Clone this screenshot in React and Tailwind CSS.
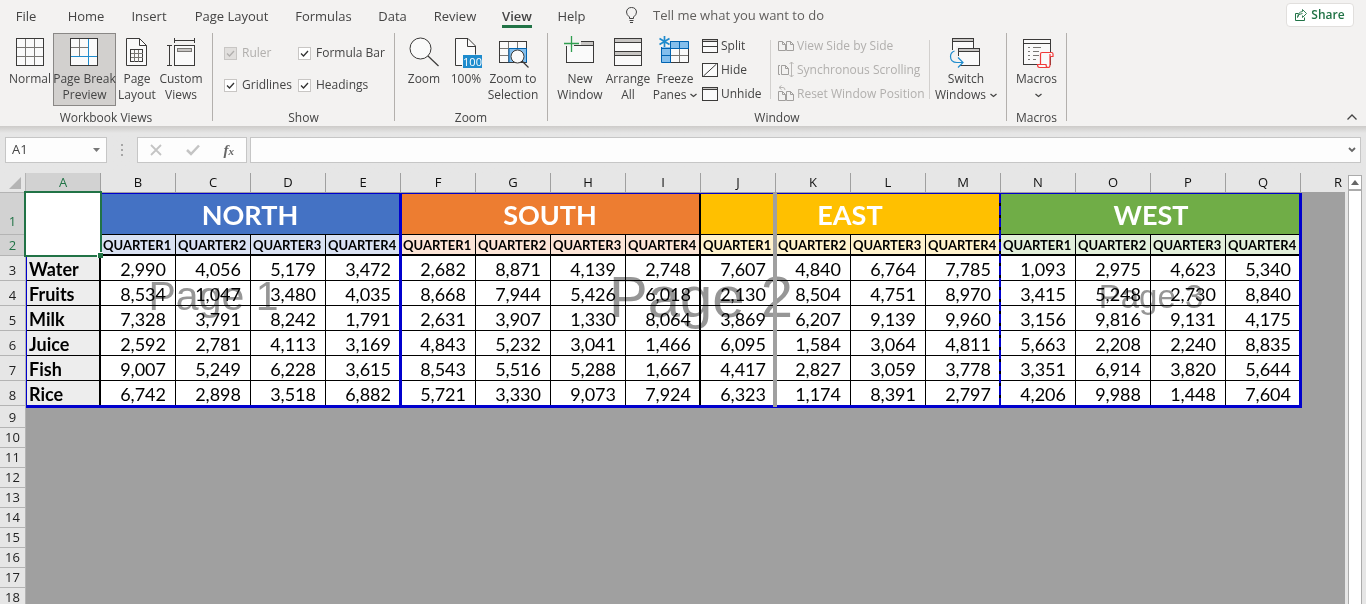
import React from "react";

const UI = "font-['Open_Sans','Noto_Sans',sans-serif]";
const CELL = "font-[Lato,Carlito,sans-serif]";

/* ---------- icons ---------- */
function Svg({ w = 30, h = 30, children, className = "" }) {
  return (
    <svg width={w} height={h} viewBox={`0 0 ${w} ${h}`} fill="none" aria-hidden="true" className={`shrink-0 overflow-visible ${className}`}>
      {children}
    </svg>
  );
}

const INK = "#3b3a39";
const MID = "#797774";

const NormalIcon = () => (
  <Svg>
    <rect x="1.5" y="1.5" width="27" height="27" fill="#fafafa" stroke={INK} />
    <path d="M10.5 2v26M19.5 2v26M2 10.5h26M2 19.5h26" stroke={MID} />
  </Svg>
);
const PageBreakIcon = () => (
  <Svg w={31}>
    <rect x="1.5" y="1.5" width="27" height="27" fill="#fafafa" stroke={INK} />
    <path d="M10.5 2v17M2 10.5h17" stroke={MID} />
    <path d="M19.5 2v26M2 19.5h26" stroke="#1e8bcd" />
  </Svg>
);
const PageLayoutIcon = () => (
  <Svg>
    <path d="M4.500 1.500h13l7 7v20h-20z" fill="#fafafa" stroke={INK} />
    <path d="M17.500 1.500v7h7" stroke={INK} />
    <rect x="8.500" y="12.500" width="12" height="12" stroke={INK} />
    <path d="M12.500 13v12M16.500 13v12M9 16.500h12M9 20.500h12" stroke={MID} />
  </Svg>
);
const CustomViewsIcon = () => (
  <Svg>
    <rect x="8.500" y="8.500" width="20" height="20" fill="#fafafa" stroke={INK} />
    <rect x="11.500" y="11.500" width="14" height="3" fill="#c8c6c4" stroke={MID} />
    <path d="M8.500 1v5M28.500 1v5M8.500 3.500h20M1 8.500h5M1 28.500h5M3.500 8.500v20" stroke={INK} />
  </Svg>
);
const ZoomIcon = () => (
  <Svg>
    <circle cx="11.500" cy="11.500" r="10.500" fill="#fafafa" stroke={INK} />
    <path d="M19 19l10.500 10" stroke={INK} strokeWidth="1.200" />
  </Svg>
);
const HundredIcon = () => (
  <Svg w={32} h={32} className="-mb-0.5">
    <path d="M12 28.500H5.500v-27h12.500l7.500 7.500v8.500" fill="#fafafa" stroke={INK} />
    <path d="M17.500 1.500v8h8" stroke={INK} />
    <rect x="13" y="18" width="19" height="13" fill="#1e8bcd" />
    <text x="22.500" y="29" textAnchor="middle" fontSize="11" fill="#fff" fontFamily="Open Sans">100</text>
  </Svg>
);
const ZoomSelIcon = () => (
  <Svg w={32} h={32} className="-mb-0.5">
    <rect x="2.500" y="4.500" width="27" height="21" fill="#fafafa" stroke={INK} />
    <path d="M11.500 5v20M20.500 5v20M3 11.500h26M3 18.500h26" stroke={MID} />
    <rect x="12" y="12" width="17" height="13" fill="#83beec" />
    <path d="M12 25.500V11.500h17.500v14" stroke="#0063b1" />
    <circle cx="20.500" cy="19.500" r="6.500" fill="#fafafa" stroke={INK} />
    <path d="M25 24l6.500 6.500" stroke={INK} strokeWidth="1.300" />
  </Svg>
);
const NewWindowIcon = () => (
  <Svg w={32}>
    <rect x="2.500" y="4.500" width="27" height="21" fill="#fafafa" stroke={INK} />
    <path d="M3 5h26v3H3z" fill="#c8c6c4" />
    <path d="M2 8.500h28" stroke={INK} />
    <path d="M0 3h17v5h-7v2H3.500v-1H0z" fill="#f3f2f1" />
    <path d="M7.500-1v16M0 6.500h15" stroke="#2f9e4f" strokeWidth="1.300" />
  </Svg>
);
const ArrangeIcon = () => (
  <Svg>
    <rect x="1.500" y="1.500" width="27" height="27" fill="#fafafa" stroke={INK} />
    <path d="M2 2h26v3H2zM2 15h26v3H2z" fill="#c8c6c4" />
    <path d="M1 5.500h28M1 14.500h28M1 18.500h28" stroke={INK} />
  </Svg>
);
const FreezeIcon = () => (
  <Svg w={32}>
    <rect x="2.500" y="4.500" width="27" height="21" fill="#fafafa" />
    <path d="M2 4h28v7.500H11.500v14H2z" fill="#83beec" />
    <path d="M20.500 12v14M12 18.500h18" stroke={MID} />
    <path d="M11.500 25.500h18V11" stroke={INK} />
    <path d="M12 25.500H2.500v-21h27v7H11.500v14M11.500 5v7M20.500 5v7M2 11.500h10M2 18.500h9" stroke="#0063b1" />
    <path d="M-1-2h12v12H-1z" fill="#f3f2f1" />
    <path d="M5.500-1v11M.5 1.500l10 6M10.500 1.500l-10 6" stroke="#1e8bcd" strokeWidth="1.700" />
  </Svg>
);
const SplitIcon = () => (
  <Svg w={16} h={14}>
    <rect x=".5" y=".5" width="15" height="13" fill="#fafafa" stroke={INK} />
    <path d="M1 1h14v1H1z" fill="#c8c6c4" />
    <path d="M0 2.500h16M0 7.500h16" stroke={INK} />
  </Svg>
);
const HideIcon = () => (
  <Svg w={16} h={14}>
    <rect x=".5" y=".5" width="15" height="13" fill="#fafafa" stroke={INK} />
    <path d="M1.500 13L14.500 1" stroke={INK} />
  </Svg>
);
const UnhideIcon = () => (
  <Svg w={16} h={14}>
    <rect x=".5" y=".5" width="15" height="13" fill="#fafafa" stroke={INK} />
    <path d="M1 1h14v1H1z" fill="#c8c6c4" />
    <path d="M0 2.500h16" stroke={INK} />
  </Svg>
);
const SideIcon = () => (
  <Svg w={16} h={16}>
    <path d="M.5 3.500h4l3 3v6h-7zM4.500 3.500v3h3M8.500 3.500h4l3 3v6h-7zM12.500 3.500v3h3" stroke="#a19f9d" />
  </Svg>
);
const SyncIcon = () => (
  <Svg w={16} h={16}>
    <path d="M2 3.500H.5v9H2M3.500 3.500h4l3 3v6h-7zM7.500 3.500v3h3" stroke="#a19f9d" />
    <path d="M13.500 0v15M11.500 2l2-2 2 2M11.500 13l2 2 2-2" stroke="#b9b7b5" />
  </Svg>
);
const ResetIcon = () => (
  <Svg w={16} h={16}>
    <path d="M.5 5.500h4l3 3v6h-7zM4.500 5.500v3h3M8.500 5.500h4l3 3v6h-7zM12.500 5.500v3h3" stroke="#a19f9d" />
    <path d="M3.500-.5L1 1.500l2.500 2M1 1.500h4q2 0 2 2.500" stroke="#b9b7b5" />
  </Svg>
);
const SwitchIcon = () => (
  <Svg w={32}>
    <rect x="2.500" y="1.500" width="21" height="17" fill="#fafafa" stroke={INK} />
    <path d="M3 2h20v2.500H3z" fill="#c8c6c4" />
    <path d="M2 4.500h22" stroke={INK} />
    <path d="M0 13h6V9h4v13H0z" fill="#f3f2f1" />
    <rect x="8.500" y="11.500" width="21" height="17" fill="#fafafa" stroke={INK} />
    <path d="M9 12h20v2.500H9z" fill="#c8c6c4" />
    <path d="M8 14.500h22" stroke={INK} />
    <path d="M6 19h4v10H6z" fill="#f3f2f1" />
    <path d="M4.500 14Q.5 15.500.5 19.500Q.5 25.500 7 25.500H12.500M8 20.500l5 5-5 5" stroke="#1e8bcd" strokeWidth="1.200" />
  </Svg>
);
const MacrosIcon = () => (
  <Svg w={32} h={32} className="-mb-0.5">
    <rect x="2.500" y="2.500" width="27" height="25" fill="#fafafa" stroke={INK} />
    <path d="M2 6.500h28" stroke={INK} />
    <path d="M7 10.500h2M12 10.500h8M7 14.500h2M12 14.500h6M7 18.500h2M12 18.500h6M7 22.500h2M12 22.500h3" stroke={MID} />
    <path d="M19.500 27.500V17q0-1.500 1.500-1.500h9.500q1.500 0 1.500 1.500v2.500h-3V28q0 2.500-2 2.500h-8.500q-2 0-2-3H26" fill="#fafafa" />
    <path
      d="M19.500 27.500V17q0-1.500 1.500-1.500h9.500q1.500 0 1.500 1.500v2.500h-3M29 17v11q0 2.500-2 2.500h-8.500q-2 0-2-3h8.500q0 3 2 3"
      stroke="#f03a3a"
      strokeWidth="1.200"
    />
  </Svg>
);
const Down = () => (
  <svg width="7" height="5" viewBox="0 0 7 5" fill="none" aria-hidden="true" className="ml-1 inline-block align-middle">
    <path d="M.5 1l3 2.500L6.500 1" stroke="#444" strokeWidth="1.300" />
  </svg>
);

/* ---------- ribbon parts ---------- */
const TABS = [
  ["File", "w-[50px]"],
  ["Home", "w-[70px]"],
  ["Insert", "w-[56px]"],
  ["Page Layout", "w-[109px]"],
  ["Formulas", "w-[75px]"],
  ["Data", "w-[63px]"],
  ["Review", "w-[62px]"],
  ["View", "w-[62px]"],
  ["Help", "w-[47px]"],
];

function Big({ icon, lines, width, active }) {
  return (
    <button
      type="button"
      className={`flex h-[73px] shrink-0 flex-col items-center border pt-[3px] leading-4 whitespace-nowrap ${width} ${
        active ? "border-[#8a8886] bg-[#d2d0ce]" : "border-transparent"
      }`}
    >
      {icon}
      <span className="mt-1 flex flex-col items-center">
        {lines.map((l, i) => (
          <span key={i}>{l}</span>
        ))}
      </span>
    </button>
  );
}

function Small({ icon, label, disabled }) {
  return (
    <button
      type="button"
      disabled={disabled}
      className={`flex h-6 items-center gap-[3px] whitespace-nowrap ${disabled ? "text-[#b1afad]" : ""}`}
    >
      {icon}
      {label}
    </button>
  );
}

function Group({ label, width, children, align = "justify-center" }) {
  return (
    <section aria-label={label} className={`flex h-[88px] shrink-0 flex-col border-r border-[#b3b0ad] ${width}`}>
      <div className={`flex h-[73px] shrink-0 ${align}`}>{children}</div>
      <div className="mt-1 text-center leading-4">{label}</div>
    </section>
  );
}

function Check({ label, disabled }) {
  return (
    <label className={`flex h-8 items-center gap-[5px] whitespace-nowrap ${disabled ? "text-[#b1afad]" : ""}`}>
      <span className="grid shrink-0">
        <input
          type="checkbox"
          defaultChecked
          disabled={disabled}
          className="col-start-1 row-start-1 size-[13px] appearance-none border border-[#c8c6c4] bg-white disabled:bg-[#e1dfdd]"
        />
        <svg width="13" height="13" viewBox="0 0 13 13" fill="none" aria-hidden="true" className="pointer-events-none col-start-1 row-start-1">
          <path d="M3 6.500l2.500 2.500L10 4" stroke={disabled ? "#b1afad" : "#333"} strokeWidth="1.300" />
        </svg>
      </span>
      {label}
    </label>
  );
}

function Ribbon() {
  return (
    <header className="flex h-[126px] shrink-0 flex-col bg-[#f3f2f1] text-xs text-[#444]">
      <nav className="flex h-8 shrink-0 items-start pl-px text-[13px]">
        {TABS.map(([t, w]) => (
          <button key={t} type="button" className={`flex h-7 shrink-0 flex-col items-center pt-[7px] leading-[18px] whitespace-nowrap ${w}`}>
            <span className={t === "View" ? "border-b-3 border-[#217346] font-semibold" : ""}>{t}</span>
          </button>
        ))}
        <label className="ml-[30px] flex items-center gap-[15px] pt-1.5">
          <svg width="13" height="18" viewBox="0 0 13 18" fill="none" className="shrink-0">
            <path d="M4.500 12.500V11Q1.500 9 1.500 6Q2 1.500 6.500 1.500T11.500 6Q11.500 9 8.500 11V12.500zM4.500 14.500h4M5 16.500h3" stroke="#444" />
          </svg>
          <input
            type="text"
            aria-label="Tell me what you want to do"
            placeholder="Tell me what you want to do"
            className="h-[18px] w-[190px] bg-transparent outline-none placeholder:text-[#605e5c]"
          />
        </label>
        <button
          type="button"
          className="mt-[3px] mr-3 ml-auto flex h-6 w-[68px] items-center justify-center gap-1 rounded-sm border border-[#e1dfdd] bg-white text-xs font-semibold text-[#217346]"
        >
          <svg width="12" height="12" viewBox="0 0 12 12" fill="none" aria-hidden="true">
            <path d="M3.500 4.500H.5v7h9v-3" stroke="#217346" />
            <path d="M2.500 8.500Q3 4.500 7.500 4.500M7.500 6.500v2l4-4-4-4v2Q3 3 2.500 8.500" stroke="#217346" strokeWidth=".9" />
          </svg>
          Share
        </button>
      </nav>
      <div className="flex min-w-0 pt-px">
        <Group label="Workbook Views" width="w-[213px]" align="pl-[7px]">
          <Big icon={<NormalIcon />} lines={["Normal"]} width="w-[46px]" />
          <Big icon={<PageBreakIcon />} lines={["Page Break", "Preview"]} width="w-[63px]" active />
          <Big icon={<PageLayoutIcon />} lines={["Page", "Layout"]} width="w-[42px]" />
          <Big icon={<CustomViewsIcon />} lines={["Custom", "Views"]} width="w-[46px]" />
        </Group>
        <Group label="Show" width="w-[182px]">
          <div className="grid w-full grid-cols-[74px_1fr] content-start pt-1 pl-[11px]">
            <Check label="Ruler" disabled />
            <Check label="Formula Bar" />
            <Check label="Gridlines" />
            <Check label="Headings" />
          </div>
        </Group>
        <Group label="Zoom" width="w-[153px]">
          <Big icon={<ZoomIcon />} lines={["Zoom"]} width="w-[44px]" />
          <Big icon={<HundredIcon />} lines={["100%"]} width="w-[40px]" />
          <Big icon={<ZoomSelIcon />} lines={["Zoom to", "Selection"]} width="w-[54px]" />
        </Group>
        <Group label="Window" width="w-[459px]">
          <Big icon={<NewWindowIcon />} lines={["New", "Window"]} width="w-[48px]" />
          <Big icon={<ArrangeIcon />} lines={["Arrange", "All"]} width="w-[48px]" />
          <Big icon={<FreezeIcon />} lines={["Freeze", <>Panes<Down /></>]} width="w-[46px]" />
          <div className="flex w-[68px] flex-col pt-px pl-1">
            <Small icon={<SplitIcon />} label="Split" />
            <Small icon={<HideIcon />} label="Hide" />
            <Small icon={<UnhideIcon />} label="Unhide" />
          </div>
          <div className="mx-1 mt-[7px] flex h-[59px] w-[160px] items-center border-x border-[#d2d0ce] pl-[7px]">
            <div className="flex flex-col">
              <Small icon={<SideIcon />} label="View Side by Side" disabled />
              <Small icon={<SyncIcon />} label="Synchronous Scrolling" disabled />
              <Small icon={<ResetIcon />} label="Reset Window Position" disabled />
            </div>
          </div>
          <Big icon={<SwitchIcon />} lines={["Switch", <>Windows<Down /></>]} width="w-[64px]" />
        </Group>
        <Group label="Macros" width="w-[60px]">
          <Big icon={<MacrosIcon />} lines={["Macros", <Down />]} width="w-[46px]" />
        </Group>
        <button type="button" aria-label="Collapse the ribbon" className="mr-2 ml-auto flex items-end">
          <svg width="12" height="8" viewBox="0 0 12 8" fill="none">
            <path d="M1.500 6.500L6 2l4.500 4.500" stroke="#444" strokeWidth="1.300" />
          </svg>
        </button>
      </div>
    </header>
  );
}

function FormulaBar() {
  return (
    <div className="flex h-[47px] shrink-0 items-start bg-linear-to-b from-[#cdcbc9] to-[#e6e6e6] to-15% px-[5px] pt-[11px] text-xs text-[#444]">
      <div className="flex h-[26px] w-[102px] items-center border border-[#c6c6c6] bg-[#fdfdfd] pr-1.5 pl-1.5">
        <input aria-label="Name box" defaultValue="A1" className="w-full min-w-0 bg-transparent text-[13px] outline-none" />
        <svg width="7" height="4" viewBox="0 0 7 4" className="shrink-0" aria-hidden="true">
          <path d="M0 0h7L3.500 4z" fill="#777" />
        </svg>
      </div>
      <div className="flex h-[26px] w-[30px] flex-col items-center justify-center gap-[3px]">
        <i className="size-[2px] bg-[#a6a6a6]" />
        <i className="size-[2px] bg-[#a6a6a6]" />
        <i className="size-[2px] bg-[#a6a6a6]" />
      </div>
      <div className="mr-[3px] flex h-[26px] w-[110px] items-center justify-around border border-[#c6c6c6] bg-[#fdfdfd]">
        <button type="button" aria-label="Cancel">
          <svg width="12" height="12" viewBox="0 0 12 12" fill="none">
            <path d="M1 1l10 10M11 1L1 11" stroke="#c4c4c4" strokeWidth="1.800" />
          </svg>
        </button>
        <button type="button" aria-label="Enter">
          <svg width="14" height="12" viewBox="0 0 14 12" fill="none">
            <path d="M1 6l4 4 8-8.500" stroke="#c4c4c4" strokeWidth="2.500" />
          </svg>
        </button>
        <button type="button" aria-label="Insert function" className="font-['Liberation_Serif',serif] text-[15px] leading-4 font-bold text-[#666] italic">
          f<span className="text-[11px]">x</span>
        </button>
      </div>
      <div className="flex h-[26px] flex-1 items-center border border-[#c6c6c6] bg-[#fdfdfd] pr-1 pl-2">
        <input aria-label="Formula bar" className="w-full min-w-0 bg-transparent outline-none" />
        <svg width="8" height="6" viewBox="0 0 8 6" fill="none" className="shrink-0" aria-hidden="true">
          <path d="M1 1l3 3 3-3" stroke="#666" strokeWidth="1.800" />
        </svg>
      </div>
    </div>
  );
}

/* ---------- sheet ---------- */
const COLS = "ABCDEFGHIJKLMNOPQR".split("");
const REGIONS = [
  ["NORTH", "bg-[#4472c4]", "bg-[#d9e1f2]"],
  ["SOUTH", "bg-[#ed7d31]", "bg-[#fce4d6]"],
  ["EAST", "bg-[#ffc000]", "bg-[#fff2cc]"],
  ["WEST", "bg-[#70ad47]", "bg-[#e2efda]"],
];
const DATA = [
  ["Water", "2,990 4,056 5,179 3,472 2,682 8,871 4,139 2,748 7,607 4,840 6,764 7,785 1,093 2,975 4,623 5,340"],
  ["Fruits", "8,534 1,047 3,480 4,035 8,668 7,944 5,426 6,018 2,130 8,504 4,751 8,970 3,415 5,248 2,730 8,840"],
  ["Milk", "7,328 3,791 8,242 1,791 2,631 3,907 1,330 8,064 3,869 6,207 9,139 9,960 3,156 9,816 9,131 4,175"],
  ["Juice", "2,592 2,781 4,113 3,169 4,843 5,232 3,041 1,466 6,095 1,584 3,064 4,811 5,663 2,208 2,240 8,835"],
  ["Fish", "9,007 5,249 6,228 3,615 8,543 5,516 5,288 1,667 4,417 2,827 3,059 3,778 3,351 6,914 3,820 5,644"],
  ["Rice", "6,742 2,898 3,518 6,882 5,721 3,330 9,073 7,924 6,323 1,174 8,391 2,797 4,206 9,988 1,448 7,604"],
];
const EMPTY = [9, 10, 11, 12, 13, 14, 15, 16, 17, 18];

function RowHead({ n, h, active }) {
  return (
    <th
      scope="row"
      className={`border-r border-b border-[#b4b4b4] p-0 text-center align-bottom text-[13px] leading-[19px] font-normal ${UI} ${h} ${
        active ? "bg-[#d2d2d2] text-[#217346]" : "bg-[#e6e6e6] text-[#222]"
      }`}
    >
      {n}
    </th>
  );
}

function Sheet() {
  return (
    <div className="relative min-w-0 flex-1 overflow-hidden bg-[#a0a0a0]">
      <table className="w-[1376px] table-fixed border-separate border-spacing-0 text-black">
        <colgroup>
          <col className="w-[26px]" />
          {COLS.map((c) => (
            <col key={c} className="w-[75px]" />
          ))}
        </colgroup>
        <thead>
          <tr className="h-5 bg-[#e6e6e6]">
            <th aria-label="Select all" className="h-5 border-r border-b border-[#b4b4b4] p-0">
              <svg width="13" height="12" viewBox="0 0 13 12" className="mr-[3px] ml-auto">
                <path d="M12 0v12H0z" fill="#b4b4b4" />
              </svg>
            </th>
            {COLS.map((c) => (
              <th
                key={c}
                scope="col"
                className={`h-5 border-r border-b border-[#a0a0a0] p-0 text-center text-[13px] leading-[19px] font-normal ${UI} ${
                  c === "A" ? "bg-[#d2d2d2] text-[#217346]" : "text-[#111]"
                }`}
              >
                {c}
              </th>
            ))}
          </tr>
        </thead>
        <tbody className={CELL}>
          <tr>
            <RowHead n={1} h="h-[42px] pb-[3px]" active />
            <td rowSpan={2} className="border-b-2 border-black bg-white p-0" />
            {REGIONS.map(([name, bg], i) => (
              <th
                key={name}
                scope="colgroup"
                colSpan={4}
                className={`border-b border-black p-0 pt-0.5 text-center text-[27px] leading-8 font-bold text-white ${i < 3 ? "border-r-2" : ""} ${bg}`}
              >
                {name}
              </th>
            ))}
          </tr>
          <tr>
            <RowHead n={2} h="h-[21px]" active />
            {REGIONS.map(([name, , tint]) =>
              [1, 2, 3, 4].map((q) => (
                <th
                  key={name + q}
                  scope="col"
                  className={`h-[21px] border-b-2 border-black p-0 pt-px pl-0.5 text-left text-[13px] leading-[18px] font-bold ${q === 4 ? "border-r-2" : "border-r"} ${tint}`}
                >
                  QUARTER{q}
                </th>
              )),
            )}
          </tr>
          {DATA.map(([item, nums], r) => (
            <tr key={item}>
              <RowHead n={r + 3} h="h-[25px]" />
              <th scope="row" className="h-[25px] border-r-2 border-b border-black bg-[#ededed] p-0 pt-0.5 pl-[3px] text-left text-[18px] leading-[22px] font-bold">
                {item}
              </th>
              {nums.split(" ").map((v, c) => (
                <td
                  key={c}
                  className={`h-[25px] border-b border-black bg-white p-0 pt-0.5 text-right text-[18px] leading-[22px] ${
                    c % 4 === 3 ? "border-r-2 pr-2" : "border-r pr-[9px]"
                  }`}
                >
                  {v}
                </td>
              ))}
            </tr>
          ))}
          {EMPTY.map((n) => (
            <tr key={n}>
              <RowHead n={n} h={n === 9 ? "h-[22px]" : "h-5"} />
              <td colSpan={18} className="p-0" />
            </tr>
          ))}
        </tbody>
      </table>

      {/* page-number watermarks */}
      <div className="pointer-events-none absolute top-5 left-[26px] flex h-[207px] w-[1275px] items-center font-['Liberation_Sans',sans-serif] text-[#969696] mix-blend-multiply">
        <span className="w-[375px] text-center text-[41px] leading-none">Page 1</span>
        <span className="w-[600px] text-center text-[58px] leading-none">Page 2</span>
        <span className="w-[300px] text-center text-[33px] leading-none">Page 3</span>
      </div>

      {/* print-area frame and page breaks */}
      <div className="pointer-events-none absolute top-5 left-[26px] h-[215px] w-[1276px] border-t border-r-3 border-b-3 border-l border-[#0000cd]">
        <div className="absolute inset-y-0 left-[372px] w-[3px] bg-[#0000cd]" />
        <div className="absolute inset-y-0 left-[972px] w-0.5 bg-[repeating-linear-gradient(#0000cd_0_9px,#000_9px_12px)]" />
        <div className="absolute -top-px -bottom-0.5 left-[746px] w-1 bg-[#a0a0a0]" />
      </div>

      {/* active cell */}
      <div className="pointer-events-none absolute top-[18px] left-6 h-[66px] w-[78px] border-2 border-[#217346] bg-white">
        <div className="absolute -right-[3px] -bottom-[3px] size-[6px] border-t border-l border-white bg-[#217346]" />
      </div>
    </div>
  );
}

export default function App() {
  return (
    <div className={`flex h-screen flex-col overflow-hidden bg-[#e6e6e6] ${UI}`}>
      <Ribbon />
      <FormulaBar />
      <main className="flex min-h-0 flex-1">
        <Sheet />
        <div className="flex w-[21px] shrink-0 flex-col pt-0.5 pr-1 pl-[3px]">
          <button type="button" aria-label="Scroll up" className="flex h-[15px] items-center justify-center border border-[#ababab] bg-white">
            <svg width="8" height="5" viewBox="0 0 8 5">
              <path d="M0 5h8L4 0z" fill="#666" />
            </svg>
          </button>
          <div className="flex-1 border-x border-t border-[#ababab] bg-white" />
        </div>
      </main>
    </div>
  );
}
